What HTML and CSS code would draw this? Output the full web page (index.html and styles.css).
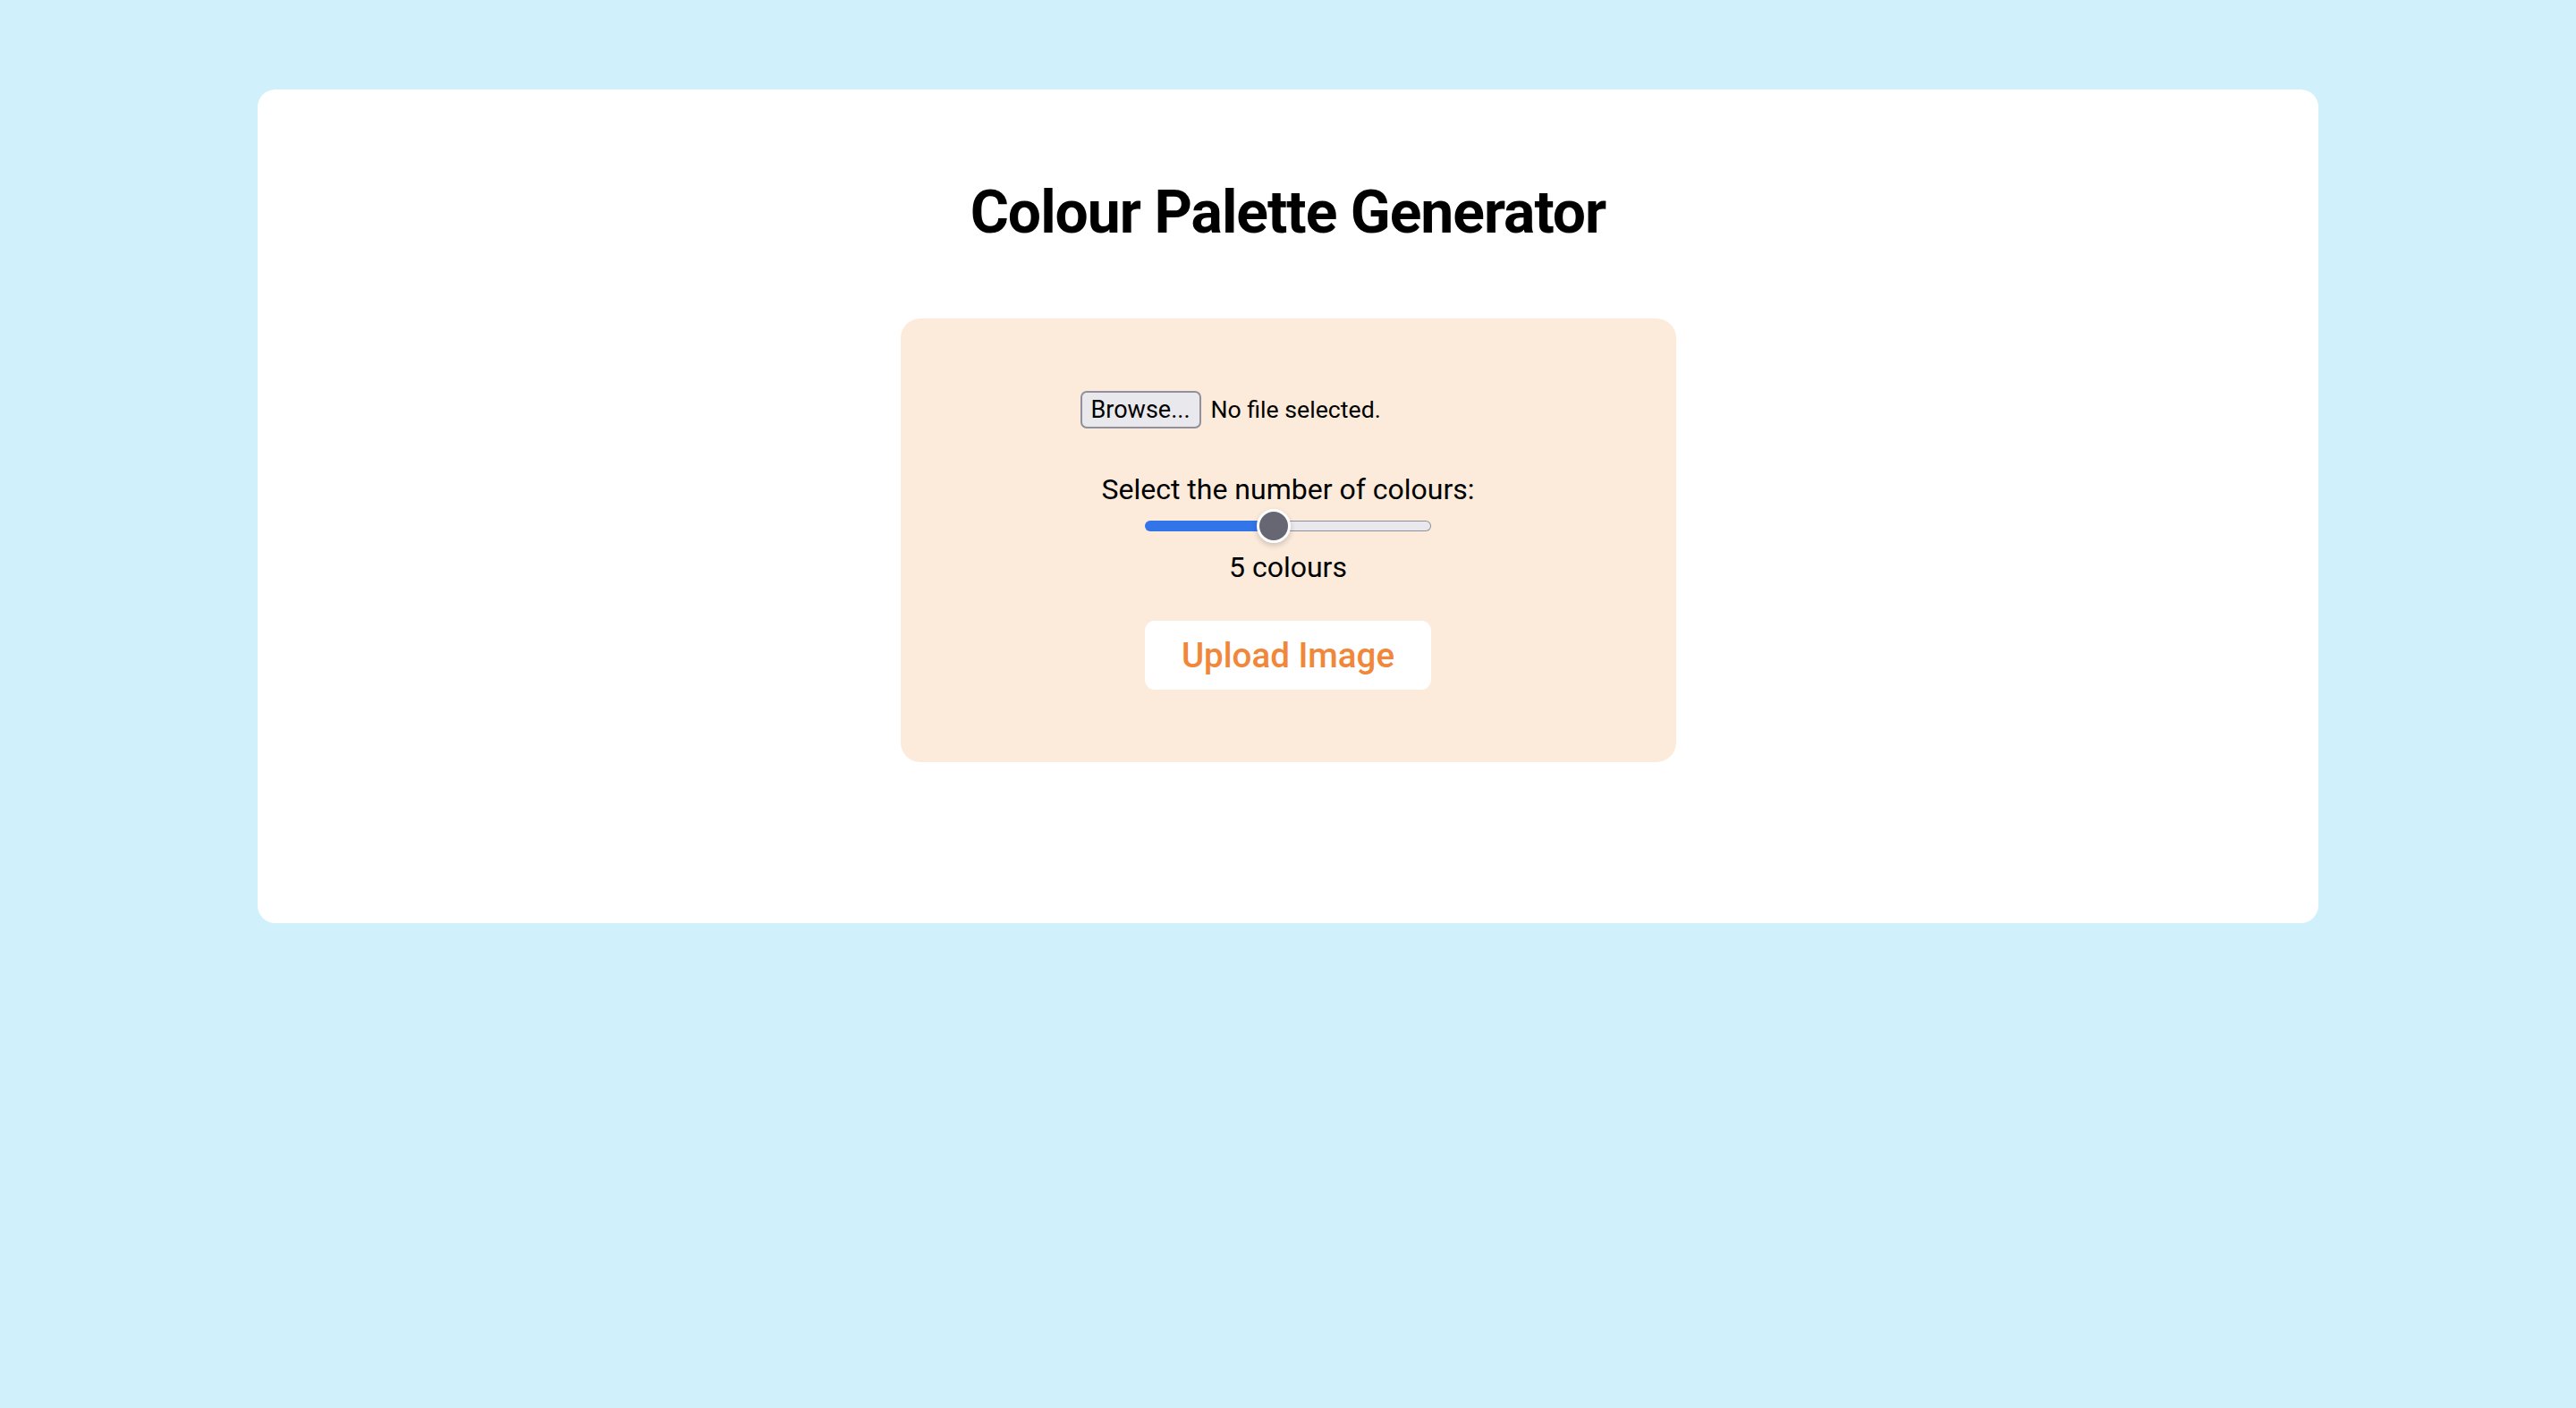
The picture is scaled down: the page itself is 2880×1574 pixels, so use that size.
FILE: index.html
```html
<!DOCTYPE html>
<html lang="en">
<head>
<meta charset="utf-8">
<title>Colour Palette Generator</title>
<link rel="stylesheet" href="styles.css">
</head>
<body>
  <main class="card">
    <h1 class="title">Colour Palette Generator</h1>
    <section class="panel">
      <div class="file-row">
        <label class="file-picker">
          <input class="file-input" type="file" accept="image/*">
          <span class="browse-btn">Browse...</span>
          <span class="file-status">No file selected.</span>
        </label>
      </div>
      <label class="count-label" for="count">Select the number of colours:</label>
      <input class="count-slider" id="count" type="range" min="1" max="10" value="5" style="--p: 45%">
      <div class="count-value">5 colours</div>
      <button class="upload-btn" type="button">Upload Image</button>
    </section>
  </main>
</body>
</html>
```
FILE: styles.css
```css
* { box-sizing: border-box; }

html, body {
  margin: 0;
  padding: 0;
}

body {
  background: #d0f0fb;
  font-family: Roboto, "Liberation Sans", Arial, sans-serif;
  color: #000;
  min-height: 100vh;
  padding-top: 100px;
}

.card {
  width: 2304px;
  height: 932px;
  margin: 0 auto;
  background: #ffffff;
  border-radius: 20px;
  padding-top: 98px;
  display: flex;
  flex-direction: column;
  align-items: center;
}

.title {
  margin: 0 0 78px;
  font-size: 66px;
  font-weight: 700;
  letter-spacing: -1px;
  line-height: 80px;
  text-align: center;
}

.panel {
  width: 867px;
  height: 496px;
  background: #fcebdb;
  border-radius: 22px;
  padding-top: 81px;
  display: flex;
  flex-direction: column;
  align-items: center;
}

.file-row {
  width: 465px;
  display: flex;
  justify-content: flex-start;
}

.file-picker {
  display: flex;
  align-items: center;
  gap: 11px;
  cursor: pointer;
  position: relative;
}

.file-input {
  position: absolute;
  width: 1px;
  height: 1px;
  opacity: 0;
  overflow: hidden;
  pointer-events: none;
}

.browse-btn {
  display: flex;
  align-items: center;
  height: 42px;
  padding: 0 10px;
  background: #e9e9ed;
  border: 2px solid #8f8f9d;
  border-radius: 7px;
  font-size: 27px;
  color: #000;
}

.file-status {
  font-size: 26.67px;
}

.count-label {
  margin-top: 50px;
  font-size: 32px;
  line-height: 37px;
}

.count-slider {
  -webkit-appearance: none;
  appearance: none;
  display: block;
  width: 320px;
  height: 38px;
  margin: 3px 0 0;
  padding: 0;
  background: transparent;
}

.count-slider::-webkit-slider-runnable-track {
  height: 12px;
  border-radius: 6px;
  border: 1px solid transparent;
  background:
    linear-gradient(to right, #3275e9 var(--p), transparent var(--p)) border-box,
    linear-gradient(#e9e9ed, #e9e9ed) padding-box,
    linear-gradient(#8f8f9d, #8f8f9d) border-box;
}

.count-slider::-webkit-slider-thumb {
  -webkit-appearance: none;
  appearance: none;
  width: 38px;
  height: 38px;
  margin-top: -14px;
  border-radius: 50%;
  background: #676774;
  border: 3px solid #ffffff;
  box-shadow: 0 3px 6px rgba(0, 0, 0, 0.18);
}

.count-value {
  margin-top: 9px;
  font-size: 32px;
  line-height: 37px;
}

.upload-btn {
  margin-top: 41px;
  width: 320px;
  height: 77px;
  border: none;
  border-radius: 11px;
  background: #ffffff;
  color: #f0873a;
  font-family: Roboto, "Liberation Sans", Arial, sans-serif;
  font-size: 38.5px;
  font-weight: 500;
  cursor: pointer;
}
```
